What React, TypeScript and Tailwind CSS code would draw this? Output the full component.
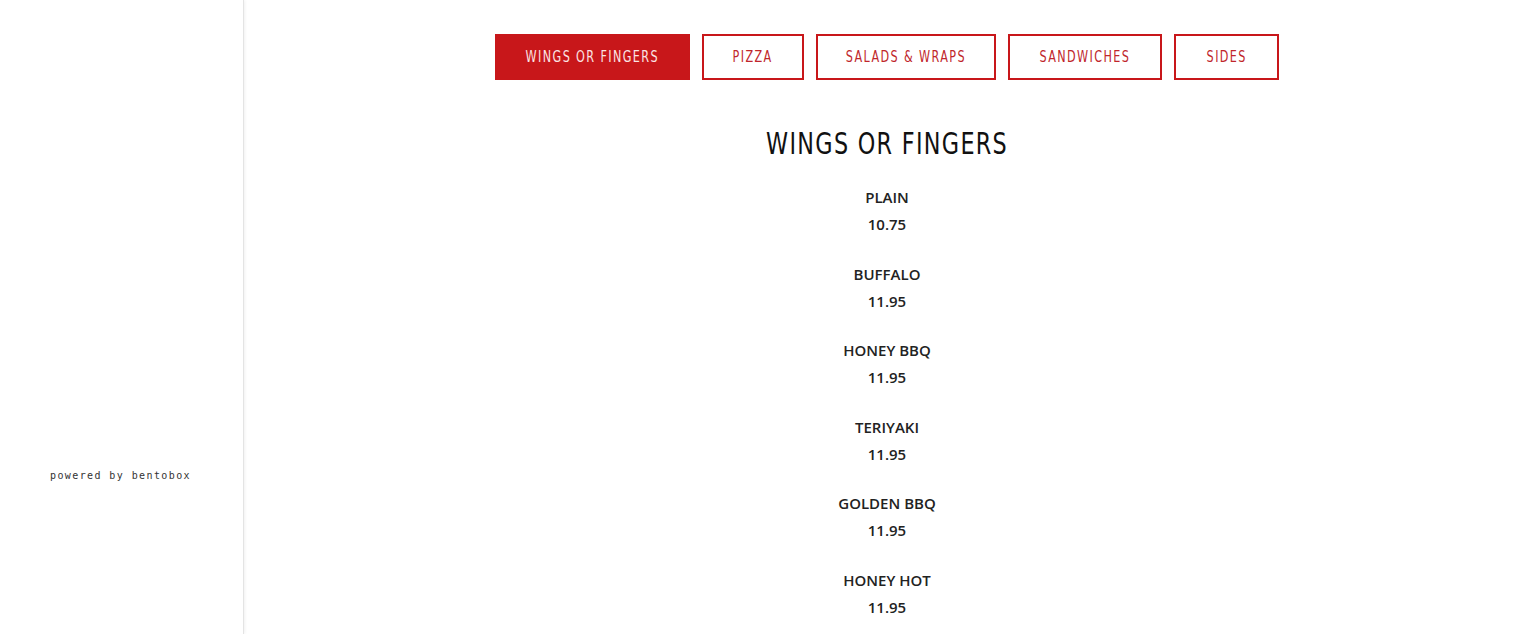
import React from 'react';

const tabs = [
  { label: 'Wings or Fingers', w: 'w-[195px]' },
  { label: 'Pizza', w: 'w-[102px]' },
  { label: 'Salads & Wraps', w: 'w-[180px]' },
  { label: 'Sandwiches', w: 'w-[154px]' },
  { label: 'Sides', w: 'w-[105px]' },
];

const items = [
  { name: 'Plain', price: '10.75' },
  { name: 'Buffalo', price: '11.95' },
  { name: 'Honey BBQ', price: '11.95' },
  { name: 'Teriyaki', price: '11.95' },
  { name: 'Golden BBQ', price: '11.95' },
  { name: 'Honey Hot', price: '11.95' },
];

const condensed = { fontFamily: '"DejaVu Sans", sans-serif' };

export default function App() {
  return (
    <div className="flex h-[634px] w-full overflow-hidden bg-white">
      <aside className="flex w-[244px] shrink-0 flex-col items-center border-r border-[#e4e4e4] shadow-[1px_0_3px_rgba(0,0,0,0.06)]">
        <div className="mt-[469px] pr-[2px] text-[10px] leading-[14px] tracking-[1.4px] text-[#333]" style={{ fontFamily: '"DejaVu Sans Mono", monospace' }}>
          powered by bentobox
        </div>
      </aside>
      <main className="flex flex-1 flex-col items-center pt-[34px]">
        <nav className="flex gap-[12px]" style={condensed}>
          {tabs.map((t, i) => (
            <button
              key={t.label}
              className={
                t.w +
                ' flex h-[46px] items-center justify-center whitespace-nowrap border-2 border-[#c8171a] text-[16px] uppercase ' +
                (i === 0 ? 'bg-[#c8171a] text-[#fbe4e4]' : 'bg-white text-[#c0262b]')
              }
            >
              <span className="inline-block scale-x-[0.7] tracking-[2px]">{t.label}</span>
            </button>
          ))}
        </nav>
        <h2 className="mt-[44px] whitespace-nowrap text-[31px] font-normal uppercase leading-[38px] text-[#111]" style={condensed}>
          <span className="inline-block scale-x-[0.72] tracking-[1.8px]">Wings or Fingers</span>
        </h2>
        <ul className="mt-[22px] flex flex-col items-center gap-[22.6px]" style={{ fontFamily: '"Open Sans", sans-serif' }}>
          {items.map((it) => (
            <li key={it.name} className="flex flex-col items-center text-[15px] font-semibold text-[#222]">
              <span className="uppercase leading-[27px]">{it.name}</span>
              <span className="leading-[27px]">{it.price}</span>
            </li>
          ))}
        </ul>
      </main>
    </div>
  );
}
